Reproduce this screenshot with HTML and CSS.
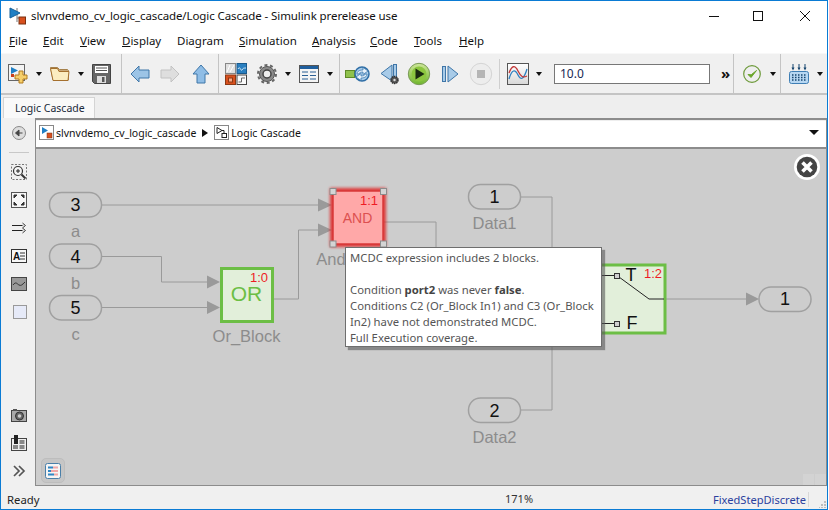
FILE: index.html
```html
<!DOCTYPE html>
<html lang="en">
<head>
<meta charset="utf-8">
<title>Logic Cascade - Simulink prerelease use</title>
<link rel="stylesheet" href="styles.css">
</head>
<body>
<div class="window">
  <header class="titlebar">
    <svg class="title-icon" width="17" height="18" viewBox="0 0 17 18"><path d="M8 1v14" stroke="#777" fill="none"/><path d="M1 1l10 5-10 5z" fill="#1f7fc4" stroke="#14609a"/><path d="M8 11h2" stroke="#777"/><rect x="10" y="10" width="6.5" height="7" fill="#d8501e" stroke="#7a3010"/></svg>
    <span class="title-text">slvnvdemo_cv_logic_cascade/Logic Cascade - Simulink prerelease use</span>
    <div class="win-controls">
      <svg width="46" height="20" viewBox="0 0 46 20"><path d="M19 10.500h10" stroke="#111"/></svg>
      <svg width="46" height="20" viewBox="0 0 46 20"><rect x="17.500" y="5.500" width="9" height="9" fill="none" stroke="#111"/></svg>
      <svg width="46" height="20" viewBox="0 0 46 20"><path d="M18 5l10 10M28 5L18 15" stroke="#111" fill="none"/></svg>
    </div>
  </header>
  <nav class="menubar">
    <span class="m-file"><u>F</u>ile</span>
    <span class="m-edit"><u>E</u>dit</span>
    <span class="m-view"><u>V</u>iew</span>
    <span class="m-display"><u>D</u>isplay</span>
    <span class="m-diagram">Dia<u>g</u>ram</span>
    <span class="m-sim"><u>S</u>imulation</span>
    <span class="m-ana"><u>A</u>nalysis</span>
    <span class="m-code"><u>C</u>ode</span>
    <span class="m-tools"><u>T</u>ools</span>
    <span class="m-help"><u>H</u>elp</span>
  </nav>
  <div class="toolbar">
    <div class="tgroup g1">
      <svg width="20" height="20" viewBox="0 0 20 20"><rect x=".5" y=".5" width="16" height="16" fill="#f4f4f4" stroke="#666"/><path d="M3 3v7l7-3.5z" fill="#1f7fc4"/><rect x="3" y="10" width="3" height="3" fill="#c9401c"/><path d="M11 7h4v4h4v4h-4v4h-4v-4H7v-4h4z" fill="#f6cf6a" stroke="#b27a1e"/></svg>
      <i class="caret"></i>
      <svg width="20" height="15" viewBox="0 0 20 15"><path d="M.5 1.5h7l2 2h8l1 1v9.500H3z" fill="#c9a877" stroke="#a5814c"/><path d="M.5 2.500l2.500 12h15l1-9H9L7.500 2.500z" fill="#fbecc0" stroke="#a5702e"/></svg>
      <i class="caret"></i>
      <svg width="19" height="20" viewBox="0 0 19 20"><path d="M.5.5h18v19h-16l-2-2z" fill="#666" stroke="#444"/><rect x="3" y="2" width="13" height="7" fill="#fff"/><path d="M4 4h11M4 6.500h11" stroke="#555"/><rect x="5" y="12" width="9" height="7" fill="#ddd"/><rect x="10" y="13" width="2.500" height="5" fill="#555"/></svg>
    </div>
    <div class="tgroup g2">
      <svg width="20" height="18" viewBox="0 0 20 18"><path d="M1 9l8-8v4h10v8H9v4z" fill="#9cc4e6" stroke="#3f76a8"/></svg>
      <svg width="20" height="18" viewBox="0 0 20 18"><path d="M19 9l-8-8v4H1v8h10v4z" fill="#dedede" stroke="#c2c2c2"/></svg>
      <svg width="22" height="20" viewBox="0 0 22 20"><path d="M11 1l8 9h-4v9H7v-9H3z" fill="#8fbde6" stroke="#3f76a8"/></svg>
    </div>
    <div class="tgroup g3">
      <svg width="22" height="22" viewBox="0 0 22 22"><rect x=".5" y=".5" width="10" height="10" fill="#e0e0e0" stroke="#888"/><path d="M2 9l3-7M5 9l4-7" stroke="#fff"/><rect x="12" y=".5" width="9.500" height="10" fill="#2a7fc0" stroke="#1a5a8c"/><path d="M13 6c2-4 3 3 4 1s2-2 4-2" stroke="#cfe6f5" fill="none"/><rect x=".5" y="12" width="10" height="9.500" fill="#d8501e" stroke="#8a3814"/><rect x="3.500" y="15" width="4" height="4" fill="#f6a98a" stroke="#8a3814"/><rect x="12" y="12" width="9.500" height="9.500" fill="#fafafa" stroke="#444"/><path d="M13.500 19h3v-4h3.500" stroke="#666" fill="none"/></svg>
      <svg width="20" height="20" viewBox="0 0 20 20"><circle cx="10" cy="10" r="7.500" fill="#8a8a8a" stroke="#555" stroke-width="1"/><circle cx="10" cy="10" r="9" fill="none" stroke="#666" stroke-width="2" stroke-dasharray="3 2.650"/><circle cx="10" cy="10" r="4" fill="#eee" stroke="#444" stroke-width="1.500"/></svg>
      <i class="caret"></i>
      <svg width="20" height="18" viewBox="0 0 20 18"><rect x=".5" y=".5" width="19" height="17" fill="#f4f4f4" stroke="#555"/><rect x="1" y="1" width="18" height="3" fill="#1f5f9e"/><path d="M3 7h6M11 7h6M3 10.500h6M11 10.500h6M3 14h6M11 14h6" stroke="#2a5f94"/></svg>
      <i class="caret"></i>
    </div>
    <div class="tgroup g4">
      <svg width="27" height="20" viewBox="0 0 27 20"><rect x=".5" y="6.500" width="9" height="7" fill="#90c24c" stroke="#5f8a28"/><path d="M9 10h3" stroke="#5f8a28"/><circle cx="17" cy="10" r="7" fill="#a9cdea" stroke="#2f6ea6" stroke-width="1.500"/><path d="M12 10c0-3 3-4 6-4V3.500L23 7l-5 3.500V8c-2 0-4 .5-4 2zM22 10c0 3-3 4-6 4v2.500L11 13l5-3.500V12c2 0 4-.5 4-2z" fill="#e8f2fa" stroke="#2f6ea6" stroke-width=".7"/></svg>
      <svg width="19" height="22" viewBox="0 0 19 22"><path d="M12 2L1 10.500 12 18z" fill="#a8cbe8" stroke="#3f76a8"/><rect x="13.500" y="1.500" width="3" height="14" fill="#a8cbe8" stroke="#3f76a8"/><circle cx="14.500" cy="17" r="3.500" fill="#555" stroke="#333" stroke-dasharray="1.500 .7" stroke-width="1.500"/><circle cx="14.500" cy="17" r="1.200" fill="#ddd"/></svg>
      <svg width="24" height="24" viewBox="0 0 24 24"><defs><linearGradient id="gp" x1="0" y1="0" x2="0" y2="1"><stop offset="0" stop-color="#cfe79a"/><stop offset="1" stop-color="#6fb52c"/></linearGradient></defs><circle cx="12" cy="12" r="10.700" fill="url(#gp)" stroke="#7a9a58"/><circle cx="12" cy="12" r="7.500" fill="#8cc63f"/><path d="M8.500 6.500l9 5.500-9 5.500z" fill="#1a2a10"/></svg>
      <svg width="22" height="20" viewBox="0 0 22 20"><rect x="3.500" y="2.500" width="3" height="15" fill="#a8cbe8" stroke="#3f76a8"/><path d="M9 2l10 8-10 8z" fill="#a8cbe8" stroke="#3f76a8"/></svg>
      <svg width="24" height="24" viewBox="0 0 24 24"><circle cx="12" cy="12" r="10.700" fill="#ededed" stroke="#d4d4d4" stroke-width="1"/><rect x="8" y="8" width="8" height="8" fill="#b5b5b5"/></svg>
    </div>
    <div class="tgroup g5">
      <svg width="22" height="22" viewBox="0 0 22 22"><defs><linearGradient id="gs" x1="0" y1="0" x2="0" y2="1"><stop offset="0" stop-color="#fff"/><stop offset="1" stop-color="#d8d8d8"/></linearGradient></defs><rect x=".5" y=".5" width="21" height="21" fill="url(#gs)" stroke="#555"/><path d="M2 16c3-10 6-10 9-4s6 4 9-6" stroke="#2c7fc0" stroke-width="1.300" fill="none"/><path d="M2 10c3-8 6-8 9-2s5 7 9 5" stroke="#c23838" stroke-width="1.300" fill="none"/></svg>
      <i class="caret"></i>
      <div class="stop-time">10.0</div>
      <span class="more">&#187;</span>
    </div>
    <div class="tgroup g6">
      <svg width="18" height="18" viewBox="0 0 18 18"><circle cx="9" cy="9" r="8.300" fill="#eee" stroke="#6d9a3a" stroke-width="1.200"/><path d="M5 9.500l3 3 5.500-7-5.300 4.300z" fill="#6aa62a" stroke="#6aa62a"/></svg>
      <i class="caret"></i>
    </div>
    <div class="tgroup g7">
      <svg width="20" height="20" viewBox="0 0 20 20"><rect x=".5" y="7.500" width="19" height="12" rx="2" fill="#b7d7f2" stroke="#3f7fb5"/><path d="M3 11h14M3 13.500h14M3 16h14" stroke="#15456f" stroke-dasharray="1.500 1.500" stroke-width="1.300"/><path d="M4 0v5M10 0v5M16 0v5" stroke="#15456f"/><path d="M2.500 3.500h3L4 6.500zM8.500 3.500h3L10 6.500zM14.500 3.500h3L16 6.500z" fill="#15456f"/></svg>
      <i class="caret"></i>
    </div>
  </div>
  <div class="tabbar"><div class="tab">Logic Cascade</div></div>
  <main class="workspace">
    <aside class="palette">
      <svg class="pal-top" width="16" height="16" viewBox="0 0 16 16"><circle cx="8" cy="8" r="6.500" fill="#ddd" stroke="#888"/><path d="M11.500 8H7M8 5L4.500 8 8 11z" fill="#444" stroke="#444"/></svg>
      <hr class="pal-rule">
      <svg width="16" height="16" viewBox="0 0 16 16"><rect x=".5" y=".5" width="15" height="15" fill="none" stroke="#777" stroke-dasharray="2 1.500"/><circle cx="7" cy="7" r="4.500" fill="#f4f4f4" stroke="#333" stroke-width="1.200"/><path d="M5 7h4M7 5v4" stroke="#222"/><path d="M10.500 10.500l4 4" stroke="#333" stroke-width="2"/></svg>
      <svg width="16" height="16" viewBox="0 0 16 16"><rect x=".5" y=".5" width="15" height="15" fill="#f7f7f7" stroke="#555"/><path d="M3 6V3h3L3 6M13 6V3h-3l3 3M3 10v3h3l-3-3M13 10v3h-3l3-3" fill="#333" stroke="#333"/></svg>
      <svg width="16" height="16" viewBox="0 0 16 16"><path d="M1 5.500h13M1 10.500h13" stroke="#222" stroke-width="1"/><path d="M11.500 3l3 2.500-3 2.500M11.500 8l3 2.500-3 2.500" fill="#ddd" stroke="#444"/></svg>
      <svg width="16" height="16" viewBox="0 0 16 16"><rect x=".5" y="1.500" width="15" height="13" fill="#f7f7f7" stroke="#333"/><text class="pal-a" x="2" y="12">A</text><path d="M9 5h5M9 8h5M9 11h5" stroke="#333"/></svg>
      <svg width="16" height="16" viewBox="0 0 16 16"><rect x=".5" y="1.500" width="15" height="13" fill="#999" stroke="#444"/><path d="M2 9c3-4 4-1 6 0s3 0 6-3" stroke="#333" fill="none"/></svg>
      <svg width="16" height="16" viewBox="0 0 16 16"><rect x="2.500" y="1.500" width="13" height="13" fill="#e6eaf8" stroke="#999"/></svg>
      <span class="pal-spacer"></span>
      <svg width="16" height="16" viewBox="0 0 16 16"><rect x=".5" y="3.500" width="15" height="11" fill="#aaa" stroke="#444"/><rect x="2" y="2" width="4" height="2" fill="#555"/><circle cx="8.500" cy="9" r="4" fill="#666" stroke="#333"/><circle cx="8.500" cy="9" r="1.800" fill="#ccc"/></svg>
      <svg width="16" height="16" viewBox="0 0 16 16"><rect x=".5" y="3.500" width="15" height="12" fill="#eee" stroke="#444"/><rect x="3" y="0" width="4" height="9" fill="#222"/><rect x="8.500" y="5" width="5" height="4" fill="#888"/><rect x="2" y="10" width="5" height="4" fill="#888"/><rect x="8.500" y="10" width="5" height="4" fill="#888"/></svg>
      <svg width="16" height="16" viewBox="0 0 16 16"><path d="M3 3l5 5-5 5M8 3l5 5-5 5" fill="none" stroke="#555" stroke-width="1.700"/></svg>
    </aside>
    <div class="editor">
      <div class="crumb">
        <svg width="15" height="15" viewBox="0 0 15 15"><rect x=".5" y=".5" width="14" height="14" fill="#fff" stroke="#888"/><path d="M3 2v7l6-3.500z" fill="#1f7fc4"/><rect x="8" y="8" width="5" height="5" fill="#d8501e" stroke="#7a3010" stroke-width=".5"/></svg>
        <span class="crumb-text">slvnvdemo_cv_logic_cascade</span>
        <i class="crumb-sep"></i>
        <svg width="15" height="15" viewBox="0 0 15 15"><rect x=".5" y=".5" width="14" height="14" fill="#fff" stroke="#888"/><path d="M3 2.500v6l5-3zM8 5.500h2v3" fill="none" stroke="#222"/><rect x="8" y="8.500" width="4.500" height="4" fill="none" stroke="#222"/></svg>
        <span class="crumb-text">Logic Cascade</span>
        <i class="crumb-drop"></i>
      </div>
      <div class="canvas">
        <svg class="diagram" width="790" height="337" viewBox="36 149 790 337">
          <defs><filter id="glow" x="-30%" y="-30%" width="160%" height="160%"><feGaussianBlur stdDeviation="1.800"/></filter></defs>
          <g class="wire">
            <path d="M101 205H318"/>
            <path d="M101 256.500H161.500V282H207"/>
            <path d="M101 307.500H207"/>
            <path d="M273 299H298.500V230H318"/>
            <path d="M384 222H436V260"/>
            <path d="M521 197H552V410H521"/>
            <path d="M664 299H746"/>
          </g>
          <g class="head">
            <path d="M318 198.500L332 205 318 211.500z"/>
            <path d="M318 223.500L332 230 318 236.500z"/>
            <path d="M207 275.500L220 282 207 288.500z"/>
            <path d="M207 301L220 307.500 207 314z"/>
            <path d="M746 292.500L759 299 746 305.500z"/>
          </g>
          <g class="port">
            <rect x="49.500" y="192.500" width="52" height="24.500" rx="12"/>
            <rect x="49.500" y="244" width="52" height="24.500" rx="12"/>
            <rect x="49.500" y="295.500" width="52" height="24.500" rx="12"/>
            <rect x="468.500" y="184.500" width="52" height="24.500" rx="12"/>
            <rect x="468.500" y="398" width="52" height="24.500" rx="12"/>
            <rect x="759" y="287" width="52" height="24.500" rx="12"/>
          </g>
          <g class="num">
            <text x="75.500" y="211">3</text>
            <text x="75.500" y="263">4</text>
            <text x="75.500" y="314">5</text>
            <text x="494.500" y="203">1</text>
            <text x="494.500" y="417">2</text>
            <text x="785" y="305">1</text>
          </g>
          <g class="label">
            <text x="75.500" y="237">a</text>
            <text x="75.500" y="289">b</text>
            <text x="75.500" y="340">c</text>
            <text x="246.500" y="342">Or_Block</text>
            <text x="331" y="265">And</text>
            <text x="494.500" y="229">Data1</text>
            <text x="494.500" y="443">Data2</text>
          </g>
          <rect class="ok-block" x="221.500" y="268.500" width="51" height="53"/>
          <text class="or-text" x="246.500" y="301">OR</text>
          <text class="count" x="268" y="282">1:0</text>
          <rect class="bad-glow" x="333" y="191" width="50" height="53" filter="url(#glow)"/>
          <rect class="bad-block" x="333" y="191" width="50" height="53"/>
          <text class="and-text" x="357.500" y="223">AND</text>
          <text class="count" x="378" y="205">1:1</text>
          <rect class="handle" x="330" y="188.500" width="6" height="6"/>
          <rect class="handle" x="380.500" y="188.500" width="6" height="6"/>
          <rect class="handle" x="330" y="241" width="6" height="6"/>
          <rect class="handle" x="380.500" y="241" width="6" height="6"/>
          <rect class="ok-block" x="580" y="265" width="85" height="68"/>
          <g class="switch">
            <path d="M590 275.500H614M590 323.500H614M619 277L649 299H664"/>
            <rect x="614.500" y="273.500" width="5" height="5"/>
            <rect x="614.500" y="321.500" width="5" height="5"/>
          </g>
          <text class="tf" x="625.500" y="281">T</text>
          <text class="tf" x="626.500" y="329">F</text>
          <text class="count" x="662" y="278">1:2</text>
        </svg>
        <svg class="close-x" width="28" height="28" viewBox="0 0 28 28"><circle cx="14" cy="14" r="13" fill="#fff"/><circle cx="14" cy="14" r="10.300" fill="#444"/><path d="M9.500 9.500l9 9M18.500 9.500l-9 9" stroke="#fff" stroke-width="3.600"/></svg>
        <div class="tooltip">
          <p>MCDC expression includes 2 blocks.</p>
          <p class="gap">Condition <b>port2</b> was never <b>false</b>.</p>
          <p>Conditions C2 (Or_Block In1) and C3 (Or_Block In2) have not demonstrated MCDC.</p>
          <p>Full Execution coverage.</p>
        </div>
        <div class="legend">
          <svg width="16" height="16" viewBox="0 0 16 16"><rect x=".5" y=".5" width="15" height="15" rx="2" fill="#f5f5f5" stroke="#4a7fa8"/><rect x="3" y="3.500" width="5" height="2" fill="#2f86c4"/><rect x="8" y="3.500" width="5" height="2" fill="#f0a8a8"/><rect x="3" y="7" width="3" height="2" fill="#2f86c4"/><rect x="6" y="7" width="7" height="2" fill="#f0a8a8"/><rect x="3" y="10.500" width="6" height="2" fill="#2f86c4"/><rect x="9" y="10.500" width="4" height="2" fill="#f0a8a8"/></svg>
        </div>
        <div class="ghost"><i></i><i></i></div>
      </div>
    </div>
  </main>
  <footer class="statusbar">
    <span class="st-ready">Ready</span>
    <span class="st-zoom">171%</span>
    <span class="st-solver">FixedStepDiscrete</span>
    <svg class="grip" width="8" height="8" viewBox="0 0 8 8"><path d="M5 1h2v2H5zM2 4h2v2H2zM5 4h2v2H5zM-1 7h2v1h-2zM2 7h2v1H2zM5 7h2v1H5z" fill="#bdbdbd"/></svg>
  </footer>
</div>
</body>
</html>
```
FILE: styles.css
```css
* { box-sizing: border-box; }
html, body { margin: 0; padding: 0; }
body { width: 829px; height: 510px; overflow: hidden; background: #fff; font-family: "Noto Sans", "Open Sans", sans-serif; font-size: 11.5px; color: #222; }
svg { display: block; flex: none; }
.window { width: 828px; height: 510px; border: 1px solid #0a7bd4; display: flex; flex-direction: column; background: #f0f0f0; }

.titlebar { height: 29px; background: #fff; display: flex; align-items: center; padding-left: 8px; flex: none; }
.title-icon { margin-right: 5px; }
.title-text { font-size: 11.500px; letter-spacing: -.09px; color: #111; white-space: nowrap; }
.win-controls { margin-left: auto; display: flex; margin-right: -1px; }

.menubar { height: 23px; background: #fff; flex: none; display: flex; align-items: center; padding-bottom: 2px; color: #111; }
.menubar span { white-space: nowrap; }
.m-file { margin-left: 8px; width: 34px; }
.m-edit { width: 37px; }
.m-view { width: 42px; }
.m-display { width: 55px; }
.m-diagram { width: 62px; }
.m-sim { width: 73px; }
.m-ana { width: 58px; }
.m-code { width: 44px; }
.m-tools { width: 45px; }

.toolbar { height: 42px; flex: none; display: flex; align-items: center; background: #f0f0f0; border-top: 1px solid #f8f8f8; border-bottom: 2px solid #c4c4c4; }
.tgroup { display: flex; align-items: center; height: 100%; border-right: 1px solid #c4c4c4; flex: none; }
.g1 { width: 121px; padding-left: 7px; gap: 8px; }
.g2 { width: 97px; padding-left: 8px; gap: 10px; }
.g3 { width: 121px; padding-left: 6px; gap: 8px; }
.g3 svg:nth-child(1) { margin-right: 2px; }
.g4 { width: 160px; padding-left: 5px; gap: 8px; border-right: 0; position: relative; }
.g4::after { content: ""; position: absolute; right: 0; top: 5px; bottom: 4px; width: 1px; background: #cfcfcf; }
.g5 { width: 234px; padding-left: 7px; gap: 7px; }
.g6 { width: 47px; padding-left: 9px; gap: 9px; }
.g7 { width: 47px; padding-left: 8px; gap: 8px; border-right: 0; }
.caret { display: block; width: 0; height: 0; border-left: 3.500px solid transparent; border-right: 3.500px solid transparent; border-top: 4px solid #111; flex: none; }
.stop-time { width: 156px; height: 20px; margin-left: 5px; border: 1px solid #777; background: #fff; padding-left: 5px; line-height: 18px; font-size: 12px; color: #1a2a55; }
.more { font-size: 15px; line-height: 1; margin-left: 4px; font-weight: 700; color: #111; }

.tabbar { height: 23px; flex: none; background: #eee; padding: 2px 0 0 2px; }
.tab { width: 92px; height: 21px; background: #f9f9f9; border: 1px solid #d4d4d4; border-bottom: 0; padding-left: 11px; line-height: 20px; color: #1a2a3a; font-size: 10.500px; white-space: nowrap; }

.workspace { flex: 1; display: flex; min-height: 0; }
.palette { width: 34px; flex: none; display: flex; flex-direction: column; align-items: center; padding: 7px 0 7px 2px; gap: 12px; background: #f0f0f0; }
.pal-top { margin-bottom: -1px; }
.pal-rule { width: 20px; margin: 0 0 -1px; border: 0; border-top: 1px solid #c8c8c8; }
.pal-spacer { flex: 1; }
.pal-a { font: 700 10px "Liberation Sans", sans-serif; fill: #111; }

.editor { flex: 1; min-width: 0; display: flex; flex-direction: column; }
.crumb { height: 31px; flex: none; display: flex; align-items: center; gap: 2px; background: #fff; border: 1px solid #8c8c8c; border-top-width: 2px; border-bottom-width: 2px; padding: 0 7px 2px 3px; box-shadow: inset 0 1px 0 #eee; }
.crumb-text { font-size: 10.500px; color: #111; white-space: nowrap; }
.crumb-sep { width: 0; height: 0; margin: 0 4px; border-top: 4.500px solid transparent; border-bottom: 4.500px solid transparent; border-left: 6px solid #111; }
.crumb-drop { margin-left: auto; width: 0; height: 0; border-left: 5px solid transparent; border-right: 5px solid transparent; border-top: 5px solid #111; }

.canvas { position: relative; flex: 1; min-height: 0; background: #cdcdcd; border-left: 1px solid #8c8c8c; border-right: 1px solid #8c8c8c; border-bottom: 1px solid #8c8c8c; }
.diagram { position: absolute; left: 0; top: 0; }
.wire path { fill: none; stroke: #9a9a9a; stroke-width: 1; }
.head path { fill: #9a9a9a; }
.port rect { fill: #cdcdcd; stroke: #a0a0a0; stroke-width: 1.500; }
.num text { font: 18px "Liberation Sans", sans-serif; fill: #111; text-anchor: middle; }
.label text { font: 16.500px "Liberation Sans", sans-serif; fill: #8c8c8c; text-anchor: middle; }
.ok-block { fill: #e2efda; stroke: #6cbe45; stroke-width: 3; }
.bad-glow { fill: none; stroke: #e02020; stroke-opacity: .85; stroke-width: 6; }
.bad-block { fill: #ffa8a8; stroke: #d83838; stroke-width: 1.500; }
.or-text { font: 21px "Liberation Sans", sans-serif; fill: #6cbe45; text-anchor: middle; }
.and-text { font: 14px "Liberation Sans", sans-serif; fill: #dc5050; text-anchor: middle; }
.count { font: 13px "Liberation Sans", sans-serif; fill: #ee1c25; text-anchor: end; }
.handle { fill: #d4d4d4; stroke: #8c8c8c; stroke-width: 1; }
.switch path { fill: none; stroke: #222; stroke-width: 1; }
.switch rect { fill: #cfcfcf; stroke: #333; stroke-width: 1; }
.tf { font: 18px "Liberation Sans", sans-serif; fill: #111; }
.close-x { position: absolute; right: 5px; top: 4px; }
.tooltip { position: absolute; left: 309px; top: 98px; width: 257px; height: 100px; padding: 2px 4px; background: #fff; border: 1px solid #6e6e6e; box-shadow: 3px 3px 1px rgba(90,90,90,.6); font-size: 11.300px; line-height: 16px; color: #555; }
.tooltip p { margin: 0; }
.tooltip .gap { margin-top: 16px; }
.tooltip b { color: #444; }
.legend { position: absolute; left: 5px; top: 309px; width: 24px; height: 25px; display: flex; align-items: center; justify-content: center; background: #c6c6c6; border: 1px solid #bdbdbd; border-radius: 5px; }
.ghost { position: absolute; right: 0; bottom: 0; display: flex; gap: 1px; }
.ghost i { display: block; width: 11px; height: 11px; background: #d3d3d3; }

.statusbar { height: 23px; flex: none; display: flex; align-items: center; background: #f0f0f0; position: relative; padding: 3px 0 0 6px; }
.st-ready { color: #222; font-size: 11.300px; }
.st-zoom { position: absolute; left: 504px; top: 5px; font-size: 11px; color: #333; }
.st-solver { margin-left: auto; color: #2b3f9e; font-size: 11.100px; padding-right: 2px; border-right: 1px solid #d8d8d8; }
.grip { margin: 9px 0 0 10px; }
```
